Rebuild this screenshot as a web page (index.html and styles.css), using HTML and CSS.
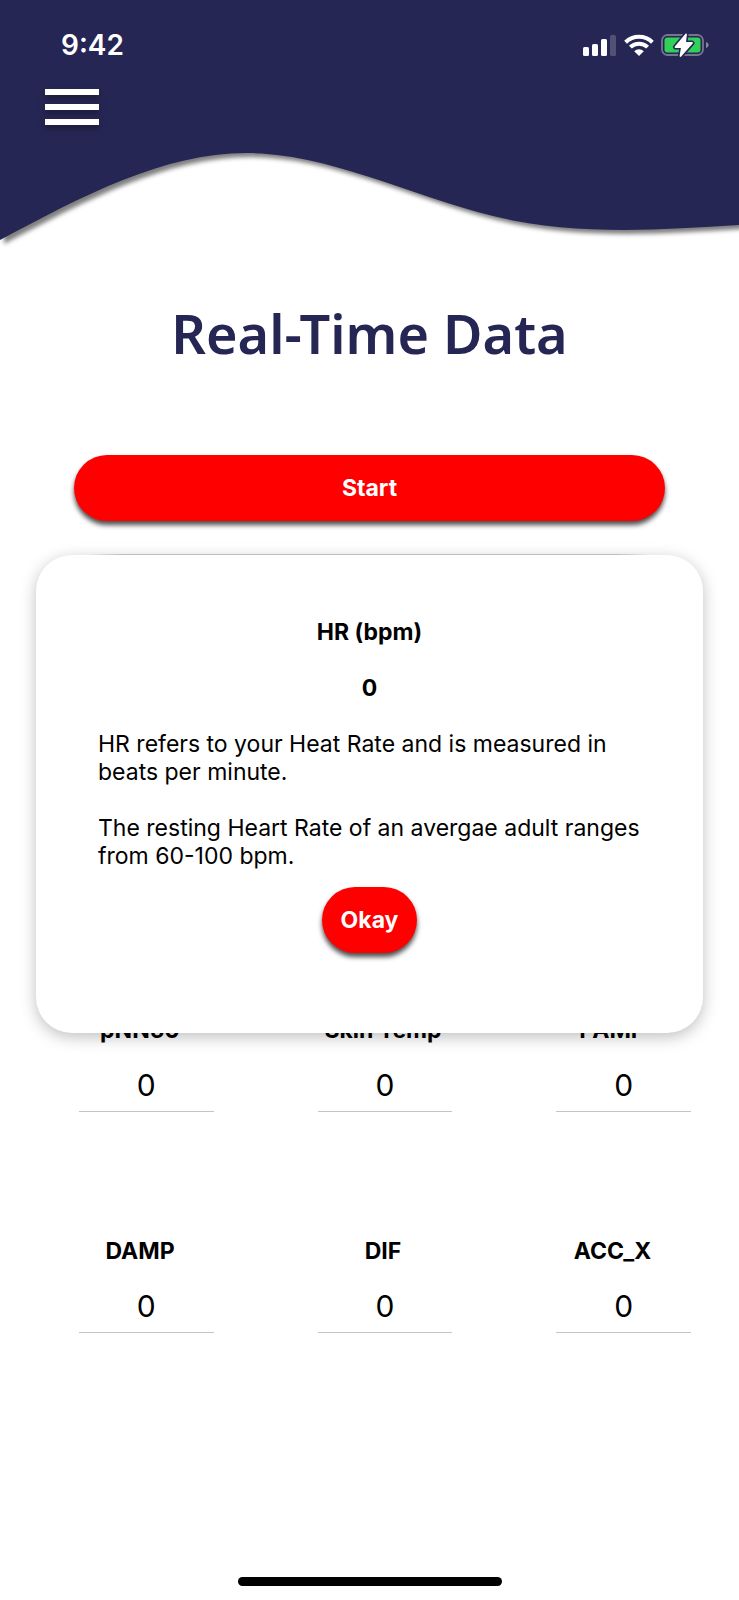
FILE: index.html
```html
<!DOCTYPE html>
<html lang="en">
<head>
<meta charset="utf-8">
<meta name="viewport" content="width=device-width, initial-scale=1">
<title>Real-Time Data</title>
<link rel="stylesheet" href="styles.css">
</head>
<body>
<header class="header">
  <svg class="wave" viewBox="0 0 739 260" preserveAspectRatio="none" aria-hidden="true">
    <path d="M0 0V240C82 196 164 153 246 153C328 153 411 196 493 216C575 236 657 230 739 225V0Z" fill="#262654"/>
  </svg>
  <div class="status">
    <span class="time">9:42</span>
    <svg class="status-icons" viewBox="583 32 126 24" role="img" aria-label="Signal, Wi-Fi, battery charging">
      <g fill="#fff">
        <rect x="583" y="46" width="6" height="9" rx="1.5"/>
        <rect x="592" y="43" width="6" height="12" rx="1.5"/>
        <rect x="601" y="38" width="6" height="17" rx="1.5"/>
        <rect x="610" y="34" width="6" height="21" rx="1.5" opacity=".2"/>
        <path d="M634.2 50.2A6.8 6.8 0 0 1 643.8 50.2L639 55Z"/>
      </g>
      <g fill="none" stroke="#fff" stroke-width="4">
        <path d="M625.6 41.2A19.3 19.3 0 0 1 652.4 41.2"/>
        <path d="M630.4 46.2A12.2 12.2 0 0 1 647.6 46.2"/>
      </g>
      <rect x="662" y="34" width="41" height="20" rx="5.5" fill="none" stroke="#75758f" stroke-width="1.8"/>
      <path d="M706 41C709.5 42 709.5 46 706 47Z" fill="#8585a0"/>
      <rect x="664.5" y="36.5" width="36" height="15" rx="3" fill="#30d158"/>
      <path d="M686 33.5L675.5 46H682L680.5 55L692 42H685Z" fill="#262654" stroke="#262654" stroke-width="5" stroke-linejoin="round"/>
      <path d="M686 33.5L675.5 46H682L680.5 55L692 42H685Z" fill="#fff" stroke="#fff" stroke-width="1.8" stroke-linejoin="round"/>
    </svg>
  </div>
  <button class="menu" type="button" aria-label="Menu"><span class="bar"></span><span class="bar"></span><span class="bar"></span></button>
</header>
<main class="main">
  <h1 class="title">Real-Time Data</h1>
  <button class="pill start" type="button">Start</button>
  <div class="overlaid">
    <section class="readings">
      <div class="reading">
        <div class="labels"><label for="pnn50">pNN50</label><label for="skin">Skin Temp</label><label for="pamp">PAMP</label></div>
        <div class="values"><input id="pnn50" value="0" readonly><input id="skin" value="0" readonly><input id="pamp" value="0" readonly></div>
      </div>
      <div class="reading">
        <div class="labels"><label for="damp">DAMP</label><label for="dif">DIF</label><label for="accx">ACC_X</label></div>
        <div class="values"><input id="damp" value="0" readonly><input id="dif" value="0" readonly><input id="accx" value="0" readonly></div>
      </div>
    </section>
    <div class="modal" role="dialog" aria-labelledby="modal-title">
      <h2 class="modal-title" id="modal-title">HR (bpm)</h2>
      <p class="modal-value">0</p>
      <div class="modal-text">
        <p>HR refers to your Heat Rate and is measured in beats per minute.</p>
        <p>The resting Heart Rate of an avergae adult ranges from 60-100 bpm.</p>
      </div>
      <button class="pill okay" type="button">Okay</button>
    </div>
  </div>
</main>
<footer class="footer"><div class="home"></div></footer>
</body>
</html>
```
FILE: styles.css
```css
* { box-sizing: border-box; }
body {
  margin: 0;
  min-height: 100vh;
  display: flex;
  flex-direction: column;
  background: #fff;
  color: #000;
  font-family: Inter, "Liberation Sans", sans-serif;
  font-size: 23px;
  line-height: 28px;
}
h1, h2, p { margin: 0; }
button, input { font: inherit; border: 0; padding: 0; }

.header { position: relative; height: 260px; }
.wave {
  position: absolute;
  inset: 0;
  width: 100%;
  height: 100%;
  z-index: -1;
  filter: drop-shadow(4px 4px 2px rgba(0, 0, 0, .5));
}
.status {
  display: flex;
  justify-content: space-between;
  align-items: center;
  padding: 29px 30px 0 61px;
  color: #fff;
}
.time { font-size: 28px; line-height: 32px; font-weight: 600; }
.status-icons { width: 126px; height: 24px; }
.menu {
  display: flex;
  flex-direction: column;
  gap: 9px;
  width: 54px;
  margin: 28px 0 0 45px;
  background: none;
  filter: drop-shadow(0 4px 3px rgba(0, 0, 0, .3));
}
.bar { height: 6px; width: 100%; background: #fff; }

.main { display: flex; flex-direction: column; }
.title {
  padding-top: 38px;
  text-align: center;
  color: #262654;
  font-family: "Noto Sans", sans-serif;
  font-size: 54px;
  line-height: 70px;
  font-weight: 600;
}
.pill {
  height: 66px;
  border-radius: 33px;
  background: #f00;
  color: #fff;
  font-weight: 700;
  box-shadow: 0 4px 5px rgba(0, 0, 0, .7);
}
.start { width: 80%; margin: 87px auto 0; }
.overlaid { position: relative; margin-top: 34px; }
.overlaid::before {
  content: "";
  position: absolute;
  top: -1px;
  left: 12%;
  right: 12%;
  height: 2px;
  background: linear-gradient(90deg, transparent, #ccc 6%, #ccc 94%, transparent);
}
.readings { display: flex; flex-direction: column; gap: 125px; padding-top: 461px; }
.labels {
  display: grid;
  grid-template-columns: 280fr 206fr 253fr;
  text-align: center;
  font-weight: 700;
}
.values {
  display: flex;
  justify-content: space-between;
  padding: 11px 48px 0 79px;
}
.values input {
  width: 22%;
  height: 57px;
  padding-top: 4px;
  border-bottom: 1px solid #c4c4c4;
  border-radius: 0;
  background: none;
  text-align: center;
  font-size: 30px;
}
.modal {
  position: absolute;
  top: 0;
  left: 36px;
  right: 36px;
  display: flex;
  flex-direction: column;
  align-items: center;
  padding: 63px 62px 80px;
  border-radius: 36px;
  background: #fff;
  box-shadow: 0 4px 16px rgba(0, 0, 0, .25);
}
.modal-title { font-size: 23px; line-height: 28px; font-weight: 700; }
.modal-value { margin-top: 28px; font-weight: 700; }
.modal-text { display: flex; flex-direction: column; gap: 28px; width: 100%; margin-top: 28px; }
.okay { width: 95px; margin-top: 17px; }
.footer { margin-top: auto; padding-bottom: 14px; }
.home { width: 264px; height: 9px; margin: 0 auto; border-radius: 5px; background: #000; }
```
